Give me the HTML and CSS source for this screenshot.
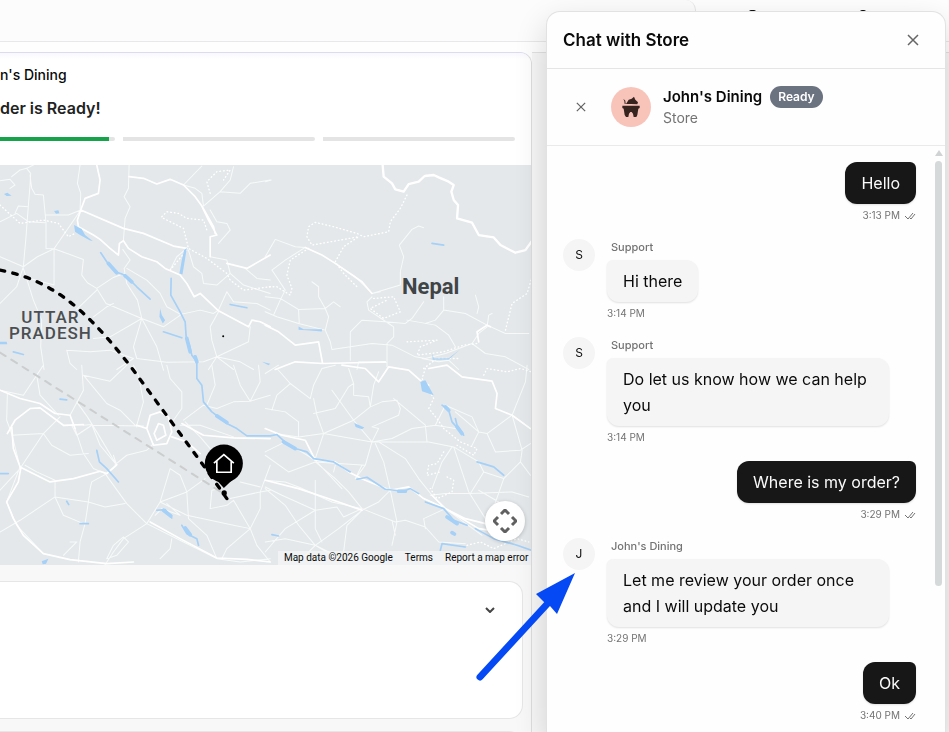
FILE: index.html
```html
<!DOCTYPE html>
<html lang="en">
<head>
<meta charset="utf-8">
<meta name="viewport" content="width=device-width, initial-scale=1">
<title>Order tracking</title>
<link rel="stylesheet" href="styles.css">
</head>
<body>
<div class="page">
  <header class="topbar">
    <div class="topbar-main"></div>
    <div class="topbar-side"><i class="mark"></i><i class="mark mark-small"></i></div>
  </header>
  <div class="columns">
    <main class="tracking">
      <section class="status">
        <p class="store">n's Dining</p>
        <h1 class="headline">der is Ready!</h1>
        <div class="steps"><span class="step step-active"></span><span class="step"></span><span class="step"></span></div>
      </section>
      <section class="map" aria-label="Map">
        <svg class="terrain" viewBox="0 0 1593 1200" preserveAspectRatio="xMaxYMin slice" aria-hidden="true">
          <g class="road" transform="translate(0 -15)">
            <path d="M0 62L30 58L45 75L30 85M35 50L60 30L80 25L92 40L90 75L84 150L78 230L70 320L50 380L0 430M90 45L95 85L105 103L130 105L138 190L138 265L162 266L242 150M80 25L100 15M240 15L232 70L242 100L240 150M0 185L50 160L85 185L135 188M45 160L55 138L85 140M138 165L205 165L242 150M162 266L112 290L70 320L0 290M162 266L250 298L245 345L262 368L290 385L318 430L425 475L412 420L380 370L372 325L390 300L368 268M162 266L162 375M70 325L100 420L125 480L122 560L132 628M162 375L90 355M290 385L340 352L372 340M230 448L290 390M387 15L385 85L372 110L390 140L375 175L370 240M550 75L605 18M700 20L690 60L660 95L610 138L605 100L585 85L550 75M660 95L720 100L750 70L810 60M425 475L400 560L410 595L500 606L610 605L650 590L745 545L750 500M425 475L470 560L490 630M425 475L490 500L545 462L600 450L640 460L655 450L680 395L700 425L770 430L810 450M655 455L630 500L635 540L650 590L700 628M650 590L720 605L760 628M650 590L625 628M425 475L330 530L280 535M380 325L440 360L480 400L500 440L540 462M565 270L580 320L605 340L610 370L650 375L690 340M560 265L530 290L510 330M655 250L690 210L680 190L650 185L630 150M630 290L680 300L690 340L730 375L810 400M735 325L770 355L810 360M200 570L270 575L330 570L400 595L350 628M200 570L210 610L230 628M280 470L320 440L340 430"/>
            <path class="highway" d="M290 15L300 60L295 100L255 115L242 150L232 180L235 200L280 225L300 238L330 265L355 285L358 250L370 242L385 265L425 290L470 305L495 325L540 345L560 370L582 410L600 400L655 452L745 500L755 480L780 485L810 500M242 150L370 205L430 220L520 258L560 265M387 50L430 55L470 72L510 58L550 75L585 110L605 138L625 180L650 225L630 230L630 290M605 138L640 200L645 220M680 310L740 325L810 285"/>
          </g>
          <g class="road" transform="translate(795 -15)">
            <path d="M0 290L30 238L90 260L120 262L60 300L20 330L40 360L60 390L45 420L25 465M0 410L45 415L100 448L180 445L205 425L225 440M0 455L35 470L100 490L180 510L190 470L180 445L160 410L160 380L140 365M100 448L102 490M180 510L195 545L200 568L255 560L320 550L380 555L450 590L480 595L540 580L620 550L640 520L665 500L670 465L680 460M255 600L255 515L290 480L360 485L420 490L440 475L475 425M320 410L305 425L310 450L370 490L385 500L385 530L365 550L365 620M320 400L405 375L405 335L415 290L402 255L440 208L460 198L475 203M210 310L270 350L320 400L345 395M425 480L510 495L550 525L570 560M535 410L535 450L510 480L480 490M535 450L600 460L665 495L720 520L790 520M620 550L660 580L720 590L790 628M470 595L520 605L550 600L580 628M630 405L640 440L635 460M0 65L18 60M275 628L280 605L365 607"/>
            <path class="highway" d="M120 262L170 285L210 310L290 365L320 400M0 495L40 515L90 555L160 545L172 610L300 607L360 605M30 628L90 605L172 610M640 545L635 515L665 495L675 500"/>
            <path class="border" d="M352 15L355 50L380 70L390 88L415 95L430 72L460 65L478 48L505 45L520 52L550 65L565 75L558 95L565 120L578 135L575 175L620 188L640 225L685 232L705 255L750 278L780 270L798 245"/>
          </g>
          <g class="road" transform="translate(0 600)">
            <path d="M0 75L70 90L110 30L130 0M110 30L120 90L175 150M22 88L20 165L35 205L60 305L20 410L50 480L130 565M35 210L130 205L180 155M130 205L155 240L210 270L265 265M210 150L250 75L245 0M250 30L330 48L380 0M250 30L320 115L360 135L410 185M230 110L262 155L290 200L350 300L320 325M190 182L215 180L230 210L275 180L430 182M250 180L275 178L300 240L350 300L340 270M225 190L250 265L280 310L315 325L380 415L440 475L550 530L650 580L720 590L810 580M410 180L430 110L415 30L400 0M345 298L380 270L440 255L460 235M500 0L510 40L545 80L545 130L520 165M75 300L110 320L165 345L165 395L265 410L315 425L375 415M0 375L60 310L130 205M265 410L270 370L275 350L320 325M265 410L255 475L240 530L235 590M165 395L60 465L0 500M165 395L190 450L250 475M440 475L370 520L340 560L315 598M440 475L480 410L510 310L540 330L560 380L480 410M560 380L615 340M560 380L565 460L620 510L650 580M480 410L560 450L700 480L750 490L780 430L780 380L810 300M555 170L600 215L630 250M550 165L610 120L650 130L700 110L750 108L810 90M635 0L645 60L620 120M700 0L720 60L750 108L780 50L775 0M540 180L600 180L700 215M630 430L635 375L660 370M630 430L680 420L700 405L750 490L770 540L810 590M690 400L780 380L810 375M750 490L680 550L665 580M720 350L780 365M370 515L340 540L320 580L350 570L385 530L370 515M480 580L510 550L515 520M190 570L230 530L210 530M465 450L485 430L540 450L500 415"/>
            <path class="highway" d="M0 75L60 100L120 115L165 145L210 150L225 190M22 205L45 165L90 130L120 128L190 180L250 178M60 305L150 350L220 340L300 318L320 325L350 298M35 180L40 250L62 310L55 350L20 410L40 460L70 510L130 565L210 583L320 595L400 590M440 190L450 150L480 140L505 155L515 200L500 235L460 240L440 190L410 180M515 215L560 230L600 265M545 175L610 210L700 218L810 220M450 470L540 520L650 578L740 582L810 590M462 205L475 175L490 180L497 210L470 225Z"/>
          </g>
          <g class="road" transform="translate(795 600)">
            <path d="M0 25L40 0M0 130L60 140L100 170L100 215M20 135L35 90L75 55L135 100L145 60L170 10L210 0M75 55L35 10M145 100L155 150L175 205L150 280M145 145L210 130L250 65L265 55L250 10M265 55L265 90L310 95L315 125L265 165L175 205L100 215L30 205M200 75L265 165L320 230M315 125L325 60L340 20M315 125L350 110L395 105L405 130L400 150L320 185L340 190L320 230L490 230L565 245L640 290M320 230L300 300L270 340M330 235L355 290L375 375L395 470L380 540M340 230L420 280L460 340L500 390L540 430M175 205L320 230L380 220L440 190L510 180L570 190M385 100L480 180L485 230M510 180L540 120L620 155L640 200L665 205L740 150M570 140L640 200L620 240M565 245L610 380L660 460M495 390L540 385L615 385L740 380L790 395M560 245L530 290L500 370M615 385L655 320L715 340L680 440L670 460M715 340L765 290L770 255L740 150M765 290L795 330M665 205L690 260L765 255L795 235M640 290L655 320M640 375L700 410M0 270L70 320L150 290L300 300L270 340L290 300M150 290L210 340L250 380L290 430M0 260L60 230L150 285L230 370M0 345L60 350L100 365L200 410L290 430M0 365L50 390L150 435L215 425L235 455L290 430L390 470L420 465M150 345L150 490L170 530M0 370L60 420L100 480L150 540L200 570M150 435L60 490L0 560M290 435L245 480L235 560M290 435L340 410L375 375M290 435L220 490L150 540L60 520L0 530M150 540L120 570M150 540L210 570M420 465L480 485L520 530L600 535M540 430L475 460L480 490M785 0L780 50L740 150L795 190M380 465L390 510M475 400L540 430L650 510M205 320L210 300"/>
            <path class="highway" d="M0 190L50 210L120 225L150 285L210 290L250 320L300 345L375 375L430 365L475 400L540 430L600 460L660 475M0 345L100 370L220 410L290 435M230 0L300 10L340 50L370 5L430 15L470 50L490 60M490 10L545 0L590 35L680 48L695 85L690 130L740 150L795 190M500 390L540 430L640 490L710 500"/>
          </g>
          <g class="trail">
            <path d="M0 120L60 175L130 165L175 175L205 215L225 205M485 155L500 140L535 145L560 160L610 165L620 195M490 160L550 190L565 250L620 280L680 325L690 345L730 375L810 365M510 315L560 255M630 85L620 50L650 20L690 15L670 45"/>
            <path d="M1220 90L1200 130L1170 170L1165 200L1090 215L1070 205L1000 185L945 172L925 185L920 215L935 240L1020 225L1075 215L1030 245L1005 290L1030 325L1070 365M925 250L870 285L860 330L875 370L870 390L830 365L800 365M1120 400L1180 395L1200 440L1150 460L1110 430L1160 405M1220 530L1310 525L1260 545L1250 570L1330 560L1390 540L1430 535M1270 610L1310 580L1380 580M1592 345L1580 385L1535 415L1515 495"/>
            <path d="M1275 610L1265 640L1300 700L1285 730L1310 760L1330 790L1380 830L1430 850L1420 870L1370 840M1330 860L1310 895L1285 900L1280 930L1320 920M1340 935L1360 945L1355 980L1310 1000L1290 970M1450 630L1460 610L1520 620L1560 610L1593 620M1400 1140L1440 1130L1480 1150L1550 1120L1585 1130"/>
          </g>
          <g class="water">
            <path d="M12 87L22 83L35 92L20 93ZM162 138L175 136L178 145L168 146ZM222 180L245 192L255 210L278 228L270 226L240 210L225 200ZM0 530L20 530L22 537L0 537ZM552 255L560 249L547 328L538 325L545 285ZM480 430L485 450L495 465L488 475L478 455ZM785 590L810 596L805 600ZM125 1188L145 1180L138 1195L128 1197ZM1260 650L1275 645L1300 690L1265 678ZM1062 773L1092 787L1085 792L1066 785ZM895 484L910 492L965 492L965 499L930 496L895 494ZM1296 565L1300 580L1345 579L1380 552L1345 583L1297 584Z"/>
            <path class="river" d="M302 263L320 290L345 320L375 330L410 365L450 402M490 500L545 518M690 418L740 428M513 340L512 390L540 440L555 470L558 515L568 540L575 570L590 590L590 640L605 660L610 710L635 740L655 755L680 775L710 790L740 812L810 812L830 808L860 835L885 850L920 860L940 880L1000 890L1050 920M1070 942L1100 936L1155 972L1210 978L1230 970L1255 985M1275 1010L1330 1030L1360 1065L1400 1080M1325 720L1345 735L1355 770L1390 810L1370 780L1365 760M1430 890L1480 905L1510 930M1425 1090L1480 1120L1550 1140L1593 1155M1320 1155L1325 1135L1395 1145M545 1080L560 1105L590 1120L595 1140M290 855L298 890L320 910L355 950M470 1035L495 1033L515 1058M0 925L25 925M240 1075L265 1075M200 1008L206 1018M180 702L200 704M40 560L70 568M1295 235L1330 240M815 1108L835 1112"/>
            <path class="wide" d="M325 295L350 323M375 332L395 350M560 520L570 560M585 575L590 590M650 752L680 772M850 830L885 850M1340 1055L1370 1075M1335 725L1345 735M1370 785L1385 805M1195 978L1215 978M555 1088L570 1108M490 1035L512 1052M1355 1102L1362 1106"/>
          </g>
          <path class="line-straight" d="M0 562L672 986"/>
          <path class="line-curve" d="M0 315C150 345 250 420 400 615L618 912L680 1000"/>
          <g class="pin">
            <path d="M645 940L671 968L701 940Z"/><circle cx="672" cy="983" r="8"/><circle cx="671" cy="895" r="57"/>
            <path class="house" d="M643 892L671 868L699 892M650 888V921H693V888"/>
          </g>
          <circle cx="669" cy="513" r="3"/>
        </svg>
        <span class="place region">UTTAR<br>PRADESH</span>
        <span class="place country">Nepal</span>
        <button class="map-control" aria-label="Map camera controls">
          <svg viewBox="0 0 24 24" width="24" height="24" aria-hidden="true"><path d="M8 5l4-4 4 4M8 19l4 4 4-4M5 8l-4 4 4 4M19 8l4 4-4 4"/></svg>
        </button>
        <div class="attribution"><span>Map data ©2026 Google</span><a href="#">Terms</a><a href="#">Report a map error</a></div>
      </section>
      <section class="details">
        <div class="card card-tall">
          <button class="expand" aria-label="Expand"><svg viewBox="0 0 10 6" width="10" height="6" aria-hidden="true"><path d="M1 1l4 4 4-4"/></svg></button>
        </div>
        <div class="card"></div>
      </section>
    </main>
    <aside class="backdrop"></aside>
  </div>
</div>

<section class="chat" role="dialog" aria-labelledby="chat-title">
  <header class="chat-head">
    <h2 id="chat-title">Chat with Store</h2>
    <button class="close" aria-label="Close"><svg viewBox="0 0 12 12" width="12" height="12" aria-hidden="true"><path d="M1 1l10 10M11 1L1 11"/></svg></button>
  </header>
  <div class="contact">
    <button class="leave" aria-label="Leave chat"><svg viewBox="0 0 12 12" width="10" height="10" aria-hidden="true"><path d="M1 1l10 10M11 1L1 11"/></svg></button>
    <svg class="logo" viewBox="0 0 120 120" width="40" height="40" aria-hidden="true">
      <circle cx="60" cy="60" r="60"/>
      <path d="M34 56H86V63L82 65L79 84L76 90H68L66 80L62 75H58L54 80L52 90H45L41 84L38 65L34 63ZM45 51L53 38L62 35L69 29L73 38L81 46L79 52L60 51ZM37 35L43 41L44 51L41 51L40 43Z"/>
    </svg>
    <div class="who">
      <div class="name-row"><h3>John's Dining</h3><span class="badge">Ready</span></div>
      <p>Store</p>
    </div>
  </div>
  <div class="thread">
    <ol class="messages">
      <li class="sent"><p class="bubble">Hello</p><div class="time">3:13 PM <svg class="ticks" viewBox="0 0 12 8" width="12" height="8" aria-hidden="true"><path d="M1 4l3 3 5-6M6 6l1 1 4-5"/></svg></div></li>
      <li class="received"><span class="avatar">S</span><div class="body"><span class="sender">Support</span><p class="bubble">Hi there</p><div class="time">3:14 PM</div></div></li>
      <li class="received"><span class="avatar">S</span><div class="body"><span class="sender">Support</span><p class="bubble">Do let us know how we can help you</p><div class="time">3:14 PM</div></div></li>
      <li class="sent"><p class="bubble">Where is my order?</p><div class="time">3:29 PM <svg class="ticks" viewBox="0 0 12 8" width="12" height="8" aria-hidden="true"><path d="M1 4l3 3 5-6M6 6l1 1 4-5"/></svg></div></li>
      <li class="received"><span class="avatar">J</span><div class="body"><span class="sender">John's Dining</span><p class="bubble">Let me review your order once and I will update you</p><div class="time">3:29 PM</div></div></li>
      <li class="sent"><p class="bubble">Ok</p><div class="time">3:40 PM <svg class="ticks" viewBox="0 0 12 8" width="12" height="8" aria-hidden="true"><path d="M1 4l3 3 5-6M6 6l1 1 4-5"/></svg></div></li>
    </ol>
    <div class="scroll" aria-hidden="true"><i class="scroll-up"></i><i class="thumb"></i></div>
  </div>
</section>

<svg class="pointer" viewBox="0 0 104 112" width="104" height="112" aria-hidden="true">
  <path class="shaft" d="M6 105L75 30"/><path class="tip" d="M101 1L62 22L70 30L76 34L83 42Z"/>
</svg>
</body>
</html>
```
FILE: styles.css
```css
* { box-sizing: border-box; }

body {
  margin: 0;
  height: 100vh;
  overflow: hidden;
  background: #fefefe;
  color: #0a0a0a;
  font-family: Inter, "Liberation Sans", sans-serif;
}

h1, h2, h3, p, ol { margin: 0; padding: 0; }
button { padding: 0; border: 0; background: none; color: inherit; display: grid; place-items: center; }
svg { display: block; fill: none; }

.page { height: 100%; display: flex; flex-direction: column; }

.topbar { display: flex; height: 42px; flex: none; border-bottom: 1px solid #e8e8ea; }
.topbar-main { width: 696px; background: #fcfcfc; border-right: 1px solid #e5e5e5; border-top-right-radius: 10px; }
.topbar-side { flex: 1; display: flex; gap: 104px; padding: 10px 0 0 53px; }
.mark { width: 7px; height: 2px; background: #111; border-radius: 2px 2px 0 0; }
.mark-small { width: 6px; }

.columns { flex: 1; min-height: 0; display: flex; margin-top: 10px; }
.tracking {
  width: calc(56% + 1px);
  flex: none;
  display: flex;
  flex-direction: column;
  border-top: 1px solid #dcdcec;
  border-right: 1px solid #dedede;
  border-top-right-radius: 12px;
  background: #f8f8f8;
  overflow: hidden;
}
.backdrop { flex: 1; background: #f7f7f7; border-top: 1px solid #e2e2e2; }

.status { background: linear-gradient(#f8f8ff, #fff 6px); padding: 12px 16px 24px 0; flex: none; }
.store { font-size: 14px; line-height: 20px; font-weight: 500; }
.headline { margin-top: 11px; font-size: 16px; line-height: 24px; font-weight: 600; color: #222; }
.steps { margin-top: 17px; display: grid; grid-template-columns: 115fr 192fr 192fr; gap: 8px; }
.step { height: 4px; background: #e4e4e4; border-radius: 0 2px 2px 0; }
.step-active { background: linear-gradient(90deg, #16a34a 95%, #e4e4e4 95%); }

.map { position: relative; height: 400px; flex: none; background: #e4e8ea; overflow: hidden; }
.terrain { width: 100%; height: 100%; stroke-linejoin: round; stroke-linecap: round; }
.terrain > circle { fill: #000; }
.road { stroke: #f8fafa; stroke-width: 3; }
.highway { stroke: #fff; stroke-width: 5; }
.border { stroke: #fff; stroke-width: 7; }
.trail { stroke: #fff; stroke-width: 4; stroke-dasharray: 2 9; }
.water { fill: #a5d0f7; }
.river { fill: none; stroke: #a5d0f7; stroke-width: 5; }
.wide { fill: none; stroke: #a5d0f7; stroke-width: 11; }
.line-straight { stroke: #cbcdce; stroke-width: 6; stroke-dasharray: 20 20; }
.line-curve { stroke: #000; stroke-width: 10; stroke-dasharray: 14 25; }
.pin { fill: #000; }
.house { fill: none; stroke: #fff; stroke-width: 5; stroke-linecap: square; stroke-linejoin: miter; }

.place { position: absolute; font-family: Roboto, sans-serif; text-align: center; }
.region { left: 9px; top: 144px; font-size: 17px; line-height: 16px; letter-spacing: 1px; font-weight: 500; color: #4b4f52; }
.country { left: 402px; top: 109px; font-size: 22px; line-height: 26px; font-weight: 700; color: #3f4447; }

.map-control {
  position: absolute;
  right: 6px;
  bottom: 24px;
  width: 40px;
  height: 40px;
  border-radius: 50%;
  background: #fff;
  box-shadow: 0 1px 4px rgba(0, 0, 0, .2);
}
.map-control path { stroke: #606060; stroke-width: 3; }
.attribution {
  position: absolute;
  right: 0;
  bottom: 0;
  display: flex;
  gap: 12px;
  padding: 0 3px 0 6px;
  background: rgba(245, 246, 247, .7);
  font: 10px/14px Roboto, sans-serif;
}
.attribution a { color: inherit; text-decoration: none; }

.details { display: flex; flex-direction: column; gap: 12px; padding: 16px 8px 0 0; }
.card {
  height: 138px;
  border: 1px solid #e6e6e6;
  border-left: 0;
  border-radius: 0 14px 14px 0;
  background: #fff;
  flex: none;
}
.card-tall { display: flex; justify-content: flex-end; align-items: flex-start; padding: 16px 20px; }
.expand { width: 24px; height: 24px; }
.expand path { stroke: #444; stroke-width: 2; }

.chat {
  position: fixed;
  top: 11px;
  right: 3px;
  bottom: 0;
  width: 400px;
  display: flex;
  flex-direction: column;
  background: #fefefe;
  border: 1px solid #e2e2e2;
  border-bottom: 0;
  border-radius: 14px 14px 0 0;
  box-shadow: 0 12px 32px rgba(0, 0, 0, .16);
  overflow: hidden;
}
.chat-head {
  height: 57px;
  flex: none;
  display: flex;
  align-items: center;
  justify-content: space-between;
  padding: 0 20px 0 16px;
  border-bottom: 1px solid #e5e5e5;
}
.chat-head h2 { font-size: 17px; line-height: 24px; font-weight: 600; }
.close { width: 24px; height: 24px; }
.close path { stroke: #666; stroke-width: 1.5; }
.contact {
  height: 77px;
  flex: none;
  display: flex;
  align-items: center;
  padding-left: 18px;
  border-bottom: 1px solid #eaeaea;
}
.leave { width: 32px; height: 32px; }
.leave path { stroke: #666; stroke-width: 1.5; }
.logo { margin: 0 12px 0 14px; }
.logo circle { fill: #f8c4ba; }
.logo path { fill: #38241f; }
.name-row { display: flex; align-items: center; gap: 8px; }
.name-row h3 { font-size: 15px; line-height: 22px; font-weight: 600; }
.badge { padding: 0 8px; border-radius: 12px; background: #6b7280; color: #fff; font-size: 12px; line-height: 22px; font-weight: 600; }
.who p { font-size: 14px; line-height: 20px; color: #737373; }

.thread { flex: 1; min-height: 0; display: flex; }
.messages {
  flex: 1;
  display: flex;
  flex-direction: column;
  gap: 16px;
  padding: 16px 19px 0 16px;
  list-style: none;
}
.sent, .body { display: flex; flex-direction: column; gap: 4px; }
.sent { align-items: flex-end; }
.received { display: flex; gap: 12px; }
.body { max-width: 80%; align-items: flex-start; }
.avatar { width: 32px; height: 32px; flex: none; border-radius: 50%; background: #f5f5f5; font-size: 12px; line-height: 32px; text-align: center; }
.sender { padding-left: 4px; font-size: 11px; line-height: 17px; font-weight: 500; color: #737373; }
.bubble {
  padding: 8px 16px;
  border-radius: 12px;
  font-size: 16px;
  line-height: 26px;
  background: #f5f5f5;
  box-shadow: 0 1px 2px rgba(0, 0, 0, .12);
}
.received .bubble { border-top-left-radius: 6px; }
.sent .bubble { border-top-right-radius: 6px; background: #171717; color: #fafafa; }
.time { display: flex; align-items: center; gap: 4px; font-size: 10px; line-height: 15px; color: #737373; }
.ticks path { stroke: #737373; stroke-width: 1; }

.scroll { width: 10px; flex: none; display: flex; flex-direction: column; align-items: center; gap: 5px; padding: 4px 3px 0 0; }
.scroll-up { border: 4px solid transparent; border-top: 0; border-bottom: 6px solid #d0d3d4; }
.thumb { width: 7px; height: 73%; border-radius: 4px; background: #d6d9da; }

.pointer { position: fixed; left: 474px; top: 572px; }
.shaft { stroke: #0549f5; stroke-width: 7; stroke-linecap: round; }
.tip { fill: #0549f5; }
```
